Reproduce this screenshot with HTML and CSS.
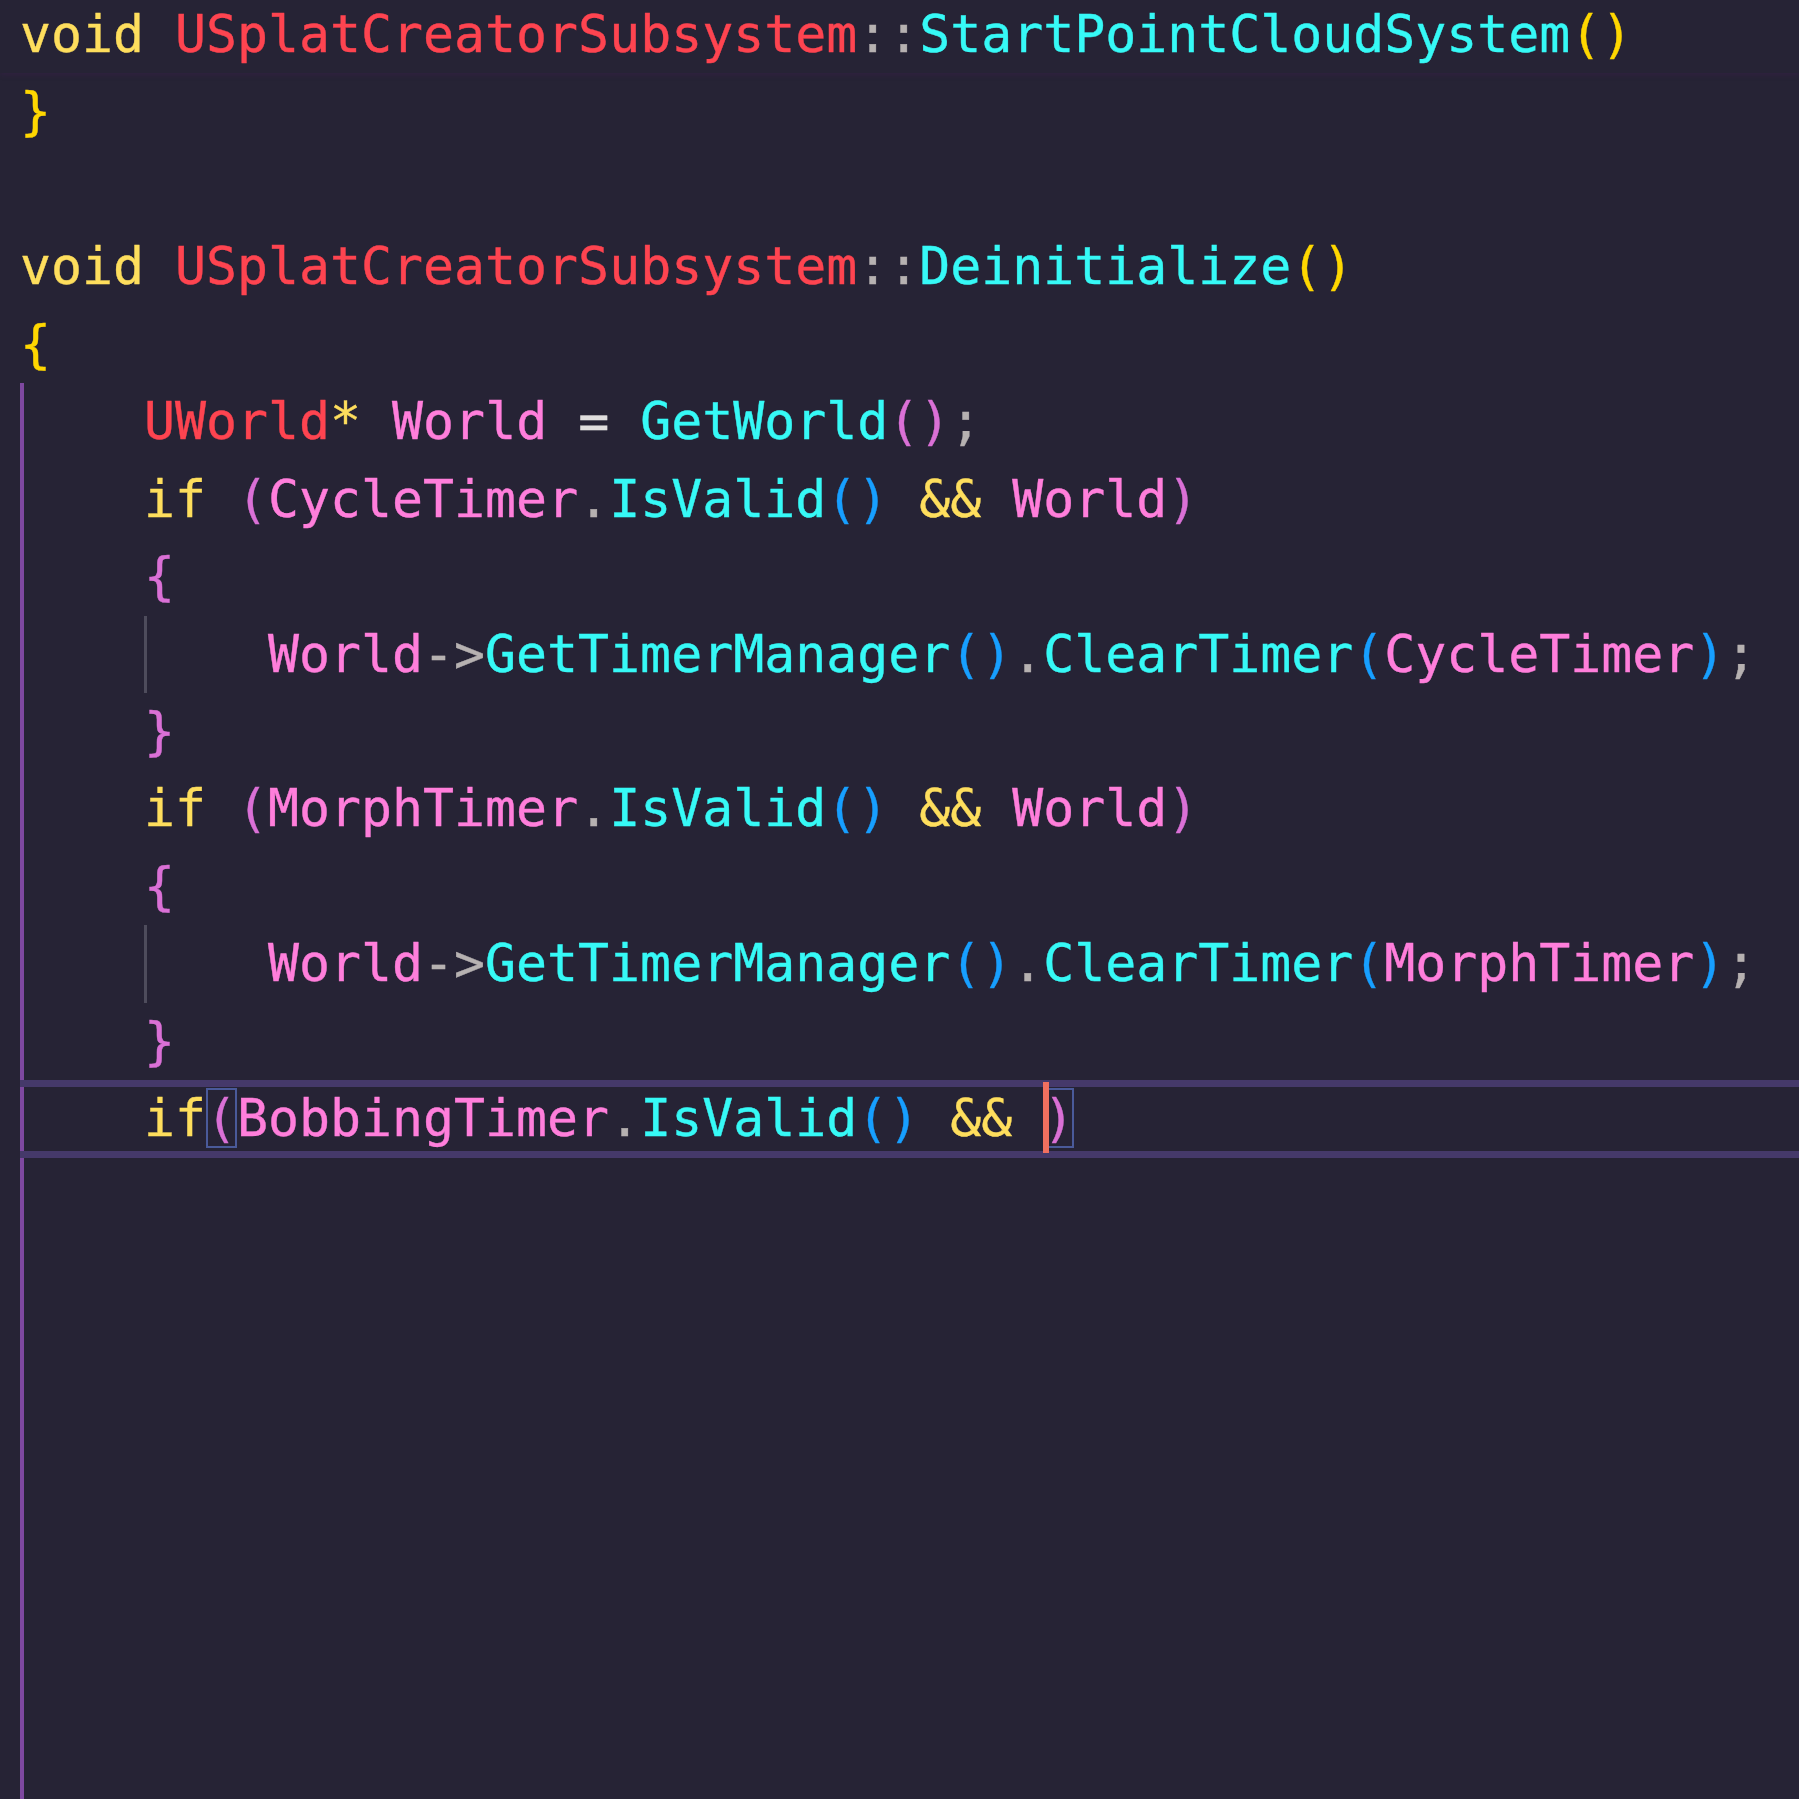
FILE: index.html
```html
<!DOCTYPE html>
<html lang="en">
<head>
    <meta charset="UTF-8">
    <meta name="viewport" content="width=device-width, initial-scale=1.0">
    <title>SplatCreatorSubsystem.cpp</title>
    <link rel="stylesheet" href="styles.css">
</head>
<body>
    <div class="editor">
        <div class="line sticky"><span class="kw">void</span> <span class="type">USplatCreatorSubsystem</span><span class="punc">::</span><span class="fn">StartPointCloudSystem</span><span class="b1">()</span></div>
        <div class="line"><span class="b1">}</span></div>
        <div class="line"> </div>
        <div class="line"><span class="kw">void</span> <span class="type">USplatCreatorSubsystem</span><span class="punc">::</span><span class="fn">Deinitialize</span><span class="b1">()</span></div>
        <div class="line"><span class="b1">{</span></div>

        <!-- function body, active indent guide -->
        <div class="block">
            <div class="line">    <span class="type">UWorld</span><span class="kw">*</span> <span class="var">World</span> <span class="op">=</span> <span class="fn">GetWorld</span><span class="b2">()</span><span class="punc">;</span></div>
            <div class="line">    <span class="kw">if</span> <span class="b2">(</span><span class="var">CycleTimer</span><span class="punc">.</span><span class="fn">IsValid</span><span class="b3">()</span> <span class="kw">&amp;&amp;</span> <span class="var">World</span><span class="b2">)</span></div>
            <div class="line">    <span class="b2">{</span></div>
            <div class="line nested">        <span class="var">World</span><span class="punc">-&gt;</span><span class="fn">GetTimerManager</span><span class="b3">()</span><span class="punc">.</span><span class="fn">ClearTimer</span><span class="b3">(</span><span class="var">CycleTimer</span><span class="b3">)</span><span class="punc">;</span></div>
            <div class="line">    <span class="b2">}</span></div>
            <div class="line">    <span class="kw">if</span> <span class="b2">(</span><span class="var">MorphTimer</span><span class="punc">.</span><span class="fn">IsValid</span><span class="b3">()</span> <span class="kw">&amp;&amp;</span> <span class="var">World</span><span class="b2">)</span></div>
            <div class="line">    <span class="b2">{</span></div>
            <div class="line nested">        <span class="var">World</span><span class="punc">-&gt;</span><span class="fn">GetTimerManager</span><span class="b3">()</span><span class="punc">.</span><span class="fn">ClearTimer</span><span class="b3">(</span><span class="var">MorphTimer</span><span class="b3">)</span><span class="punc">;</span></div>
            <div class="line">    <span class="b2">}</span></div>
            <div class="line current">    <span class="kw">if</span><span class="b2 match">(</span><span class="var">BobbingTimer</span><span class="punc">.</span><span class="fn">IsValid</span><span class="b3">()</span> <span class="kw">&amp;&amp;</span> <span class="b2 match cursor">)</span></div>
        </div>
    </div>
</body>
</html>
```

FILE: styles.css
```css
html, body {
    margin: 0;
    height: 100%;
    overflow: hidden;
}
body {
    background-color: #262335;
}
.editor {
    display: flex;
    flex-direction: column;
    min-height: calc(100vh + 4px);
    margin-top: -4px;
    padding-left: 20px;
    font-family: "DejaVu Sans Mono", monospace;
    font-size: 51.5px;
    line-height: 77.45px;
    color: #b6b1b1;
    -webkit-text-stroke: 0.4px currentColor;
}
.line {
    height: 77.45px;
    white-space: pre;
}
.sticky {
    position: relative;
    z-index: 1;
    margin-left: -20px;
    padding-left: 20px;
    background-color: #262335;
    box-shadow: 0 2px 5px rgba(70, 30, 90, 0.3);
}
.block {
    flex: 1;
    background: linear-gradient(#7e48a0, #7e48a0) no-repeat 0 0 / 4px 100%;
}
.nested {
    background: linear-gradient(#4e4c5c, #4e4c5c) no-repeat 124px 0 / 3px 100%;
}
.current {
    box-shadow: inset 0 7px 0 #45396a, inset 0 -7px 0 #45396a;
}
.kw { color: #fede5d; }
.type { color: #fe4450; }
.fn { color: #36f9f6; }
.var { color: #ff7edb; }
.op { color: #e0dede; }
.punc { color: #b6b1b1; }
.b1 { color: #ffd700; }
.b2 { color: #da70d6; }
.b3 { color: #179fff; }
.match {
    outline: 2px solid #4a5a9a;
    outline-offset: -2px;
}
.cursor {
    position: relative;
}
.cursor::before {
    content: "";
    position: absolute;
    left: 0;
    top: -6px;
    bottom: -5px;
    width: 6px;
    background-color: #f0705f;
}
```
